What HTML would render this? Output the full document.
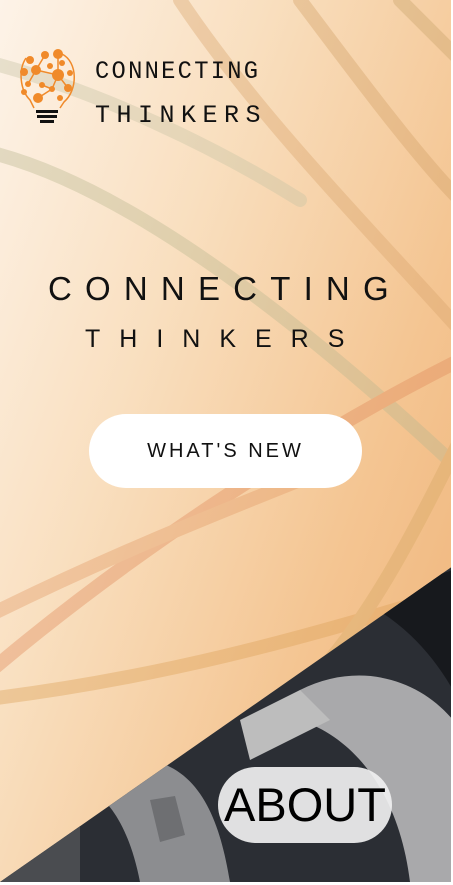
<!DOCTYPE html>
<html><head><style>
html,body{margin:0;padding:0;width:453px;height:885px;overflow:hidden;background:#fff;}
#wrap{position:absolute;left:0;top:0;width:451px;height:882px;overflow:hidden;
background:linear-gradient(110deg,#fdf3e8 0%,#f9dfbf 35%,#f4c592 70%,#efb277 100%);}
svg{position:absolute;left:0;top:0}
.t{position:absolute;font-family:"Liberation Sans",sans-serif;color:#111;white-space:nowrap}
.btn{position:absolute;background:#fff;border-radius:38px}
</style></head><body>
<div id="wrap">
<svg width="451" height="882">
 <defs>
  <clipPath id="c"><polygon points="453,566 453,882 0,882"/></clipPath>
 </defs>
 <g fill="none" stroke-linecap="round" stroke-width="14" opacity="0.38">
  <path d="M-20 150 C120 180 300 320 460 470" stroke="#b9b78f"/>
  <path d="M-20 60 C100 90 220 150 300 200" stroke="#c6c3a4"/>
  <path d="M180 0 C260 120 380 240 460 330" stroke="#d9a46c"/>
  <path d="M300 0 C360 80 420 160 460 200" stroke="#d2a066"/>
  <path d="M400 0 L460 60" stroke="#c9a36a"/>
  <path d="M-20 680 C120 560 300 440 460 360" stroke="#e0895a"/>
  <path d="M-20 700 C150 680 300 640 460 590" stroke="#dca055"/>
  <path d="M-20 620 C100 560 200 520 300 480" stroke="#e39a66"/>
  <path d="M460 440 C420 520 380 600 330 660" stroke="#d6a864"/>
 </g>
 <g clip-path="url(#c)">
  <rect x="0" y="560" width="453" height="330" fill="#2b2e34"/>
  <path d="M300 690 C360 660 420 680 453 720 L453 882 L410 882 C400 800 360 740 300 720 Z" fill="#a9a9ab"/>
  <path d="M240 720 L300 690 L330 720 L250 760 Z" fill="#bdbdbd"/>
  <path d="M150 760 C200 770 220 820 230 882 L140 882 C130 830 110 800 90 790 Z" fill="#8c8d90"/>
  <path d="M150 800 L175 796 L185 835 L160 842 Z" fill="#6e6f72"/>
  <rect x="0" y="820" width="80" height="62" fill="#4a4c50"/>
  <path d="M453 570 L453 690 C430 650 400 620 360 600 Z" fill="#17191d"/>
 </g>
 <g fill="#f08a2a">
  <circle cx="30" cy="60" r="4"/><circle cx="45" cy="55" r="4"/><circle cx="58" cy="54" r="5"/><circle cx="24" cy="72" r="4"/><circle cx="36" cy="70" r="5"/><circle cx="50" cy="66" r="3"/><circle cx="62" cy="63" r="3"/><circle cx="58" cy="75" r="6"/><circle cx="70" cy="73" r="3"/><circle cx="28" cy="84" r="3"/><circle cx="42" cy="85" r="3"/><circle cx="52" cy="89" r="3"/><circle cx="68" cy="88" r="4"/><circle cx="38" cy="98" r="5"/><circle cx="60" cy="98" r="3"/><circle cx="24" cy="92" r="3"/>
 </g>
 <g stroke="#f08a2a" stroke-width="1.5" fill="none"><path d="M26 58 C18 70 20 90 30 100 L34 108 M62 54 C78 62 78 90 64 102 L60 108"/><path d="M36 70 L58 75 L68 88 M45 55 L36 70 L28 84 M58 54 L58 75 L52 89 M42 85 L52 89 L38 98"/></g>
 <g fill="#111"><rect x="36" y="110" width="22" height="3"/><rect x="37" y="115" width="20" height="3"/><rect x="40" y="120" width="14" height="3"/></g>
</svg>
<div class="t" style="left:95px;top:57px;font-size:25px;letter-spacing:2.4px;font-family:'Liberation Mono',monospace;transform:scaleX(0.95);transform-origin:left">CONNECTING</div>
<div class="t" style="left:95px;top:101px;font-size:25px;letter-spacing:6.5px;font-family:'Liberation Mono',monospace">THINKERS</div>
<div class="t" style="left:48px;top:270px;font-size:33px;letter-spacing:13.2px">CONNECTING</div>
<div class="t" style="left:85px;top:325px;font-size:25px;letter-spacing:19px">THINKERS</div>
<div class="btn" style="left:89px;top:414px;width:273px;height:74px"></div>
<div class="t" style="left:89px;top:440px;width:273px;text-align:center;font-size:20px;letter-spacing:3px">WHAT'S NEW</div>
<div class="btn" style="left:218px;top:767px;width:174px;height:76px;background:rgba(240,240,240,0.92)"></div>
<div class="t" style="left:218px;top:777px;width:174px;text-align:center;font-size:47px;color:#000">ABOUT</div>
</div>
</body></html>
